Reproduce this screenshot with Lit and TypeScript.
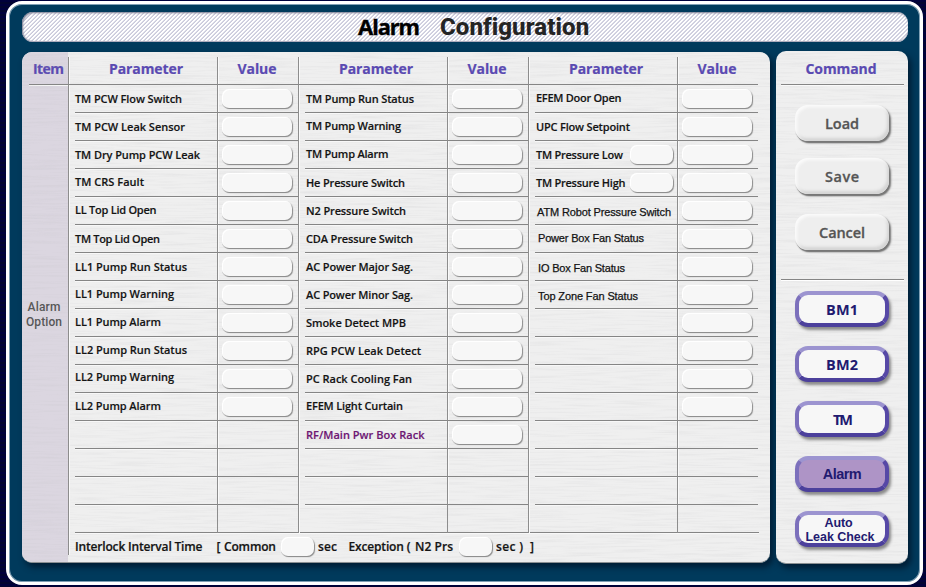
import { LitElement, html, css, svg, nothing } from "lit";
import { customElement, property } from "lit/decorators.js";
import { classMap } from "lit/directives/class-map.js";
import { styleMap } from "lit/directives/style-map.js";

type Label = { t: string; w: number; dy?: number; dx?: number; arial?: boolean; accent?: boolean; box?: boolean };
type Group = { labels: Label[]; boxes: number };

const ROWS = 16;

const GROUPS: Group[] = [
  {
    boxes: 12,
    labels: [
      { t: "TM PCW Flow Switch", w: 107 },
      { t: "TM PCW Leak Sensor", w: 110 },
      { t: "TM Dry Pump PCW Leak", w: 125 },
      { t: "TM CRS Fault", w: 69, dy: -1 },
      { t: "LL Top Lid Open", w: 81.5, dy: -1 },
      { t: "TM Top Lid Open", w: 85 },
      { t: "LL1 Pump Run Status", w: 112 },
      { t: "LL1 Pump Warning", w: 99, dy: -1 },
      { t: "LL1 Pump Alarm", w: 86, dy: -1 },
      { t: "LL2 Pump Run Status", w: 112, dy: -1 },
      { t: "LL2 Pump Warning", w: 99, dy: -2 },
      { t: "LL2 Pump Alarm", w: 86, dy: -1 },
    ],
  },
  {
    boxes: 13,
    labels: [
      { t: "TM Pump Run Status", w: 108 },
      { t: "TM Pump Warning", w: 95, dy: -1 },
      { t: "TM Pump Alarm", w: 82.5, dy: -1 },
      { t: "He Pressure Switch", w: 99 },
      { t: "N2 Pressure Switch", w: 100 },
      { t: "CDA Pressure Switch", w: 107 },
      { t: "AC Power Major Sag.", w: 107 },
      { t: "AC Power Minor Sag.", w: 107 },
      { t: "Smoke Detect MPB", w: 100 },
      { t: "RPG PCW Leak Detect", w: 115 },
      { t: "PC Rack Cooling Fan", w: 106 },
      { t: "EFEM Light Curtain", w: 97, dy: -1 },
      { t: "RF/Main Pwr Box Rack", w: 118.5, accent: true },
    ],
  },
  {
    boxes: 12,
    labels: [
      { t: "EFEM Door Open", w: 85.5, dy: -1, dx: 1 },
      { t: "UPC Flow Setpoint", w: 94, dx: 1 },
      { t: "TM Pressure Low", w: 87, dx: 1, box: true },
      { t: "TM Pressure High", w: 89.5, dx: 1, box: true },
      { t: "ATM Robot Pressure Switch", w: 134, dy: 1, dx: 2, arial: true },
      { t: "Power Box Fan Status", w: 106, dy: -1, dx: 3, arial: true },
      { t: "IO Box Fan Status", w: 87, dy: 1, dx: 3, arial: true },
      { t: "Top Zone Fan Status", w: 100, dy: 1, dx: 3, arial: true },
    ],
  },
];

/** One line of text, letter-spaced so that it fills the width it is given. */
@customElement("fit-text")
export class FitText extends LitElement {
  @property({ type: Number }) w = 0;
  @property() text = "";

  static styles = css`
    :host { display: inline-block; white-space: pre; flex: none; }
  `;

  updated() {
    const s = this.renderRoot.querySelector("span") as HTMLElement;
    s.style.letterSpacing = "0px";
    const gap = this.w - s.getBoundingClientRect().width;
    const n = Math.max(1, this.text.length - 1);
    s.style.letterSpacing = (gap / n).toFixed(3) + "px";
  }

  render() {
    return html`<div style=${styleMap({ width: this.w + "px" })}><span>${this.text}</span></div>`;
  }
}

const fit = (text: string, w: number, cls = "") =>
  html`<fit-text class=${cls} .text=${text} .w=${w}></fit-text>`;

/** Brushed-metal streaks that lie behind a panel's content. */
const grain = (id: string) => html`<svg class="grain" aria-hidden="true">
  ${svg`<filter id=${id} x="0" y="0" width="100%" height="100%">
    <feTurbulence type="fractalNoise" baseFrequency="0.022 0.55" numOctaves="2" seed="7"></feTurbulence>
    <feColorMatrix values="0 0 0 0 0.5  0 0 0 0 0.5  0 0 0 0 0.52  1.1 0 0 0 -0.5"></feColorMatrix>
  </filter>
  <rect width="100%" height="100%" filter="url(#${id})"></rect>`}
</svg>`;

@customElement("app-root")
export class AppRoot extends LitElement {
  static styles = css`
    :host {
      display: block; width: 926px; height: 587px; overflow: hidden;
      background: repeating-linear-gradient(#00003c 0 2px, #020430 2px 4px);
      font-family: "Open Sans", "Liberation Sans", sans-serif;
      font-weight: 600; color: #141414;
    }
    * { box-sizing: border-box; }
    .frame {
      width: 917px; height: 584px; margin-left: 6px; position: relative; top: 1px;
      border: 3px solid #fff; border-radius: 16px;
      background: #003a5c; box-shadow: inset 0 0 0 1px #7f9fb4;
      padding: 8px 12px 0 13px;
    }
    .title {
      height: 30px; width: 886px; border-radius: 11px;
      background: repeating-linear-gradient(135deg, #fff 0 1.1px, #b0b0ca 1.8px, #fff 2.828px);
      box-shadow: inset 1px 1px 2px #777a90, inset 0 -1px 1px #aab;
      display: flex; padding-left: 336px;
    }
    .t1 { font: 700 22px/28px "Noto Sans", "Open Sans", sans-serif; color: #000; margin-right: 20px; -webkit-text-stroke: 0.3px #000; }
    .t2 { font: 800 24px/31px Roboto, sans-serif; color: #242424; }
    .main { display: flex; align-items: flex-start; margin-top: 9px; }

    .panel {
      position: relative; background: #efefef; overflow: hidden;
      border-bottom: 1px solid #8a8f92;
    }
    .wrap { border-radius: 9px; box-shadow: 3px 4px 6px #001c33; }
    .grain { position: absolute; inset: 0; width: 100%; height: 100%; opacity: 0.38; }
    .table { width: 748px; height: 511px; display: flex; border-radius: 10px; }
    .tw { margin-top: 1px; }
    .cmdw { margin-left: 6px; }

    .item { width: 46px; background: #dbd6e0; position: relative; padding-top: 5px; }
    .ihead { margin-left: 7px; height: 28px; border-bottom: 1px solid #858585; padding-left: 4px; line-height: 24px; box-shadow: 0 1px #f6f6f6; }
    .head { font-size: 14px; font-weight: 700; color: #5a4ab2; -webkit-text-stroke: 0.2px; }
    .iopt { font: 500 12px/15px Roboto, sans-serif; color: #555; margin-top: 215px; margin-left: -2px; display: flex; flex-direction: column; align-items: center; }

    .body { position: relative; padding-top: 5px; width: 702px; }
    .groups { display: flex; height: 475px; }
    .group { width: 230px; display: grid; grid-template-columns: 149px 81px; grid-auto-rows: 28px; }
    .group > * { border-left: 1px solid #8d8d8d; box-shadow: inset 1px 0 #fafafa; }
    .th { border-bottom: 1px solid #858585; line-height: 24px; text-align: center; }
    .tp { padding-left: 6px; }
    .tv { padding-right: 2px; }
    .p { padding-left: 6px; }
    .line { height: 28px; border-bottom: 1px solid #858585; display: flex; line-height: 28px; font-size: 11px; box-shadow: 0 1px #f8f8f8; -webkit-text-stroke: 0.15px; }
    .last .line, .v.last { border-bottom: none; box-shadow: none; }
    .v { border-bottom: 1px solid #858585; padding: 4px 0 0 4px; }
    .g2 .p .line fit-text { margin-left: 1px; }
    .accent { color: #6d1673; }
    .arial { font-family: "Liberation Sans", Arial, sans-serif; font-weight: 400; -webkit-text-stroke: 0.25px #141414; }
    .box {
      width: 70px; height: 19px; border-radius: 7px; background: #f7f7f7; flex: none;
      box-shadow: inset 1px 1px #fff, 1px 1px 1px #8b8b8b, 0 1px 0 #b5b5b5;
    }
    .mid { width: 43px; margin: 4px 4px 0 auto; }
    .small { width: 33px; }
    .foot { height: 23px; border-left: 1px solid #8d8d8d; padding-left: 6px; box-shadow: inset 1px 0 #fafafa; }
    .fline { border-top: 1px solid #858585; width: 684px; height: 28px; display: flex; line-height: 27px; font-size: 12px; box-shadow: inset 0 1px #f8f8f8; -webkit-text-stroke: 0.2px; }
    .fline .box { margin-top: 4px; }

    .cmd { width: 132px; height: 513px; border-radius: 10px; display: flex; flex-direction: column; align-items: center; }
    .chead { width: 123px; height: 34px; line-height: 36px; border-bottom: 1px solid #858585; text-align: center; position: relative; padding-right: 2px; box-shadow: 0 1px #fafafa; margin-bottom: 20px; flex: none; }
    .sep { width: 123px; height: 2px; background: #858585; border-bottom: 1px solid #fff; position: relative; flex: none; }
    .plains, .navs { display: flex; flex-direction: column; margin-right: 1px; }
    .plains { gap: 17px; margin-bottom: 29px; }
    .plains button:last-child { margin-top: 3px; }
    .navs { gap: 19px; margin-top: 10px; }
    button {
      position: relative; display: flex; flex-direction: column; align-items: center; justify-content: center;
      font: 700 14.5px/16px "Open Sans", sans-serif; padding: 1px 0 0 1px; margin: 0; flex: none;
      width: 94px; height: 36px; border-radius: 13px; border: none;
    }
    .plain {
      color: #555; background: #eeeeee; font-weight: 600; padding-top: 1px; -webkit-text-stroke: 0.3px;
      box-shadow: inset 2px 2px 3px #fbfbfb, inset -2px -3px 3px #d4d4d4, 2px 2px 2px #777, 1px 2px 1px #888;
    }
    .nav {
      color: #221a70; background: #f7f7f7; border: 4px solid; border-radius: 13px;
      border-color: #9c94d0 #5648a6 #4c409c #7c70bc;
      box-shadow: 2px 3px 3px #8a8a8a;
    }
    .nav.on { background: #ae94c6; padding-top: 0; font-family: "Liberation Sans", Arial, sans-serif; }
    .two { font: 700 12.5px/14px "Liberation Sans", Arial, sans-serif; padding: 1px 3px 0 0; }
    .two .shift { margin-left: -3px; }
  `;

  private cell(l: Label | undefined, last: boolean) {
    return html`<div class=${classMap({ p: true, last })}>
      <div class="line">
        ${l
          ? html`<fit-text
              class=${classMap({ arial: !!l.arial, accent: !!l.accent })}
              style=${styleMap({ transform: `translate(${l.dx ?? 0}px, ${l.dy ?? 0}px)` })}
              .text=${l.t} .w=${l.w}></fit-text>`
          : nothing}
        ${l?.box ? html`<div class="box mid"></div>` : nothing}
      </div>
    </div>`;
  }

  private group(g: Group, gi: number) {
    return html`<div class="group g${gi + 1}">
      <div class="th tp head">${fit("Parameter", 74)}</div>
      <div class="th tv head">${fit("Value", 39)}</div>
      ${Array.from({ length: ROWS }, (_, i) => html`
        ${this.cell(g.labels[i], i === ROWS - 1)}
        <div class=${classMap({ v: true, last: i === ROWS - 1 })}>
          ${i < g.boxes ? html`<div class="box"></div>` : nothing}
        </div>`)}
    </div>`;
  }

  private gap(px: number) {
    return html`<span style=${styleMap({ width: px + "px", flex: "none" })}></span>`;
  }

  render() {
    const g = this.gap;
    return html`
      <div class="frame">
        <div class="title">${fit("Alarm", 62, "t1")}${fit("Configuration", 149, "t2")}</div>
        <div class="main">
          <div class="wrap tw"><div class="panel table">
            <div class="item">
              <div class="ihead head">${fit("Item", 31)}</div>
              <div class="iopt">${fit("Alarm", 33)}${fit("Option", 36)}</div>
            </div>
            ${grain("g1")}
            <div class="body">
              <div class="groups">${GROUPS.map((x, i) => this.group(x, i))}</div>
              <div class="foot"><div class="fline">
                ${fit("Interlock Interval Time", 127.5)}${g(14)}${fit("[", 4)}${g(3.5)}${fit("Common", 52)}${g(5)}
                <div class="box small"></div>${g(4)}${fit("sec", 19)}${g(11.5)}${fit("Exception (", 62)}${g(4.5)}${fit("N2 Prs", 38)}${g(6)}
                <div class="box small"></div>${g(4)}${fit("sec )", 27)}${g(7)}${fit("]", 4)}
              </div></div>
            </div>
          </div></div>
          <div class="wrap cmdw"><div class="panel cmd">
            ${grain("g2")}
            <div class="chead head">${fit("Command", 71)}</div>
            <div class="plains">
              <button class="plain">${fit("Load", 34)}</button>
              <button class="plain">${fit("Save", 34)}</button>
              <button class="plain">${fit("Cancel", 46)}</button>
            </div>
            <div class="sep"></div>
            <div class="navs">
              <button class="nav">${fit("BM1", 32)}</button>
              <button class="nav">${fit("BM2", 32)}</button>
              <button class="nav">${fit("TM", 20)}</button>
              <button class="nav on">${fit("Alarm", 39)}</button>
              <button class="nav two">${fit("Auto", 28, "shift")}${fit("Leak Check", 69)}</button>
            </div>
          </div></div>
        </div>
      </div>
    `;
  }
}
